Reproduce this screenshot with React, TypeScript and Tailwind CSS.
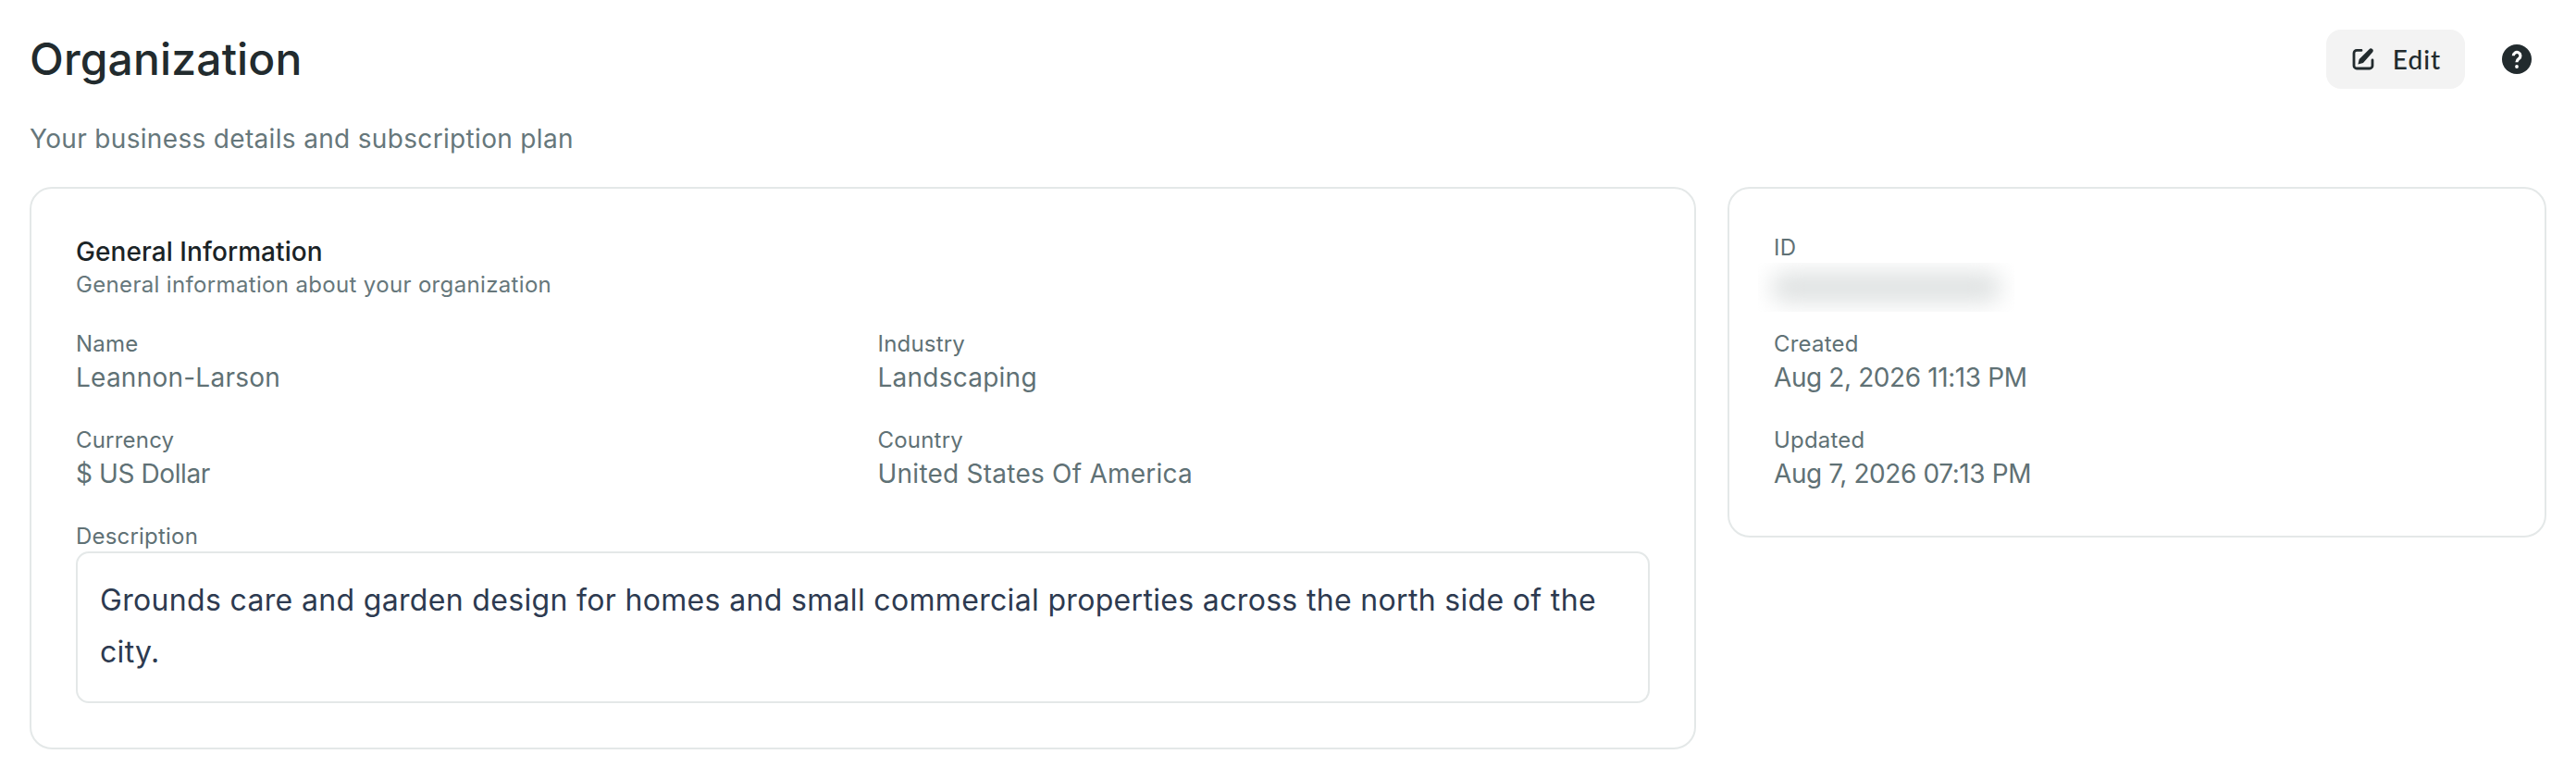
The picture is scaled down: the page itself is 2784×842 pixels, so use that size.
const font = "font-['Inter',sans-serif]";

function Field({ label, value, tight }: { label: string; value: string; tight?: boolean }) {
  return (
    <div className="flex flex-col">
      <span className="text-[24px] leading-[32px] tracking-[0.2px] text-[#5f7175]">{label}</span>
      <span className={`text-[28px] leading-[40px] text-[#5f7175] ${tight ? "tracking-[-0.4px]" : "tracking-[0.24px]"}`}>
        {value}
      </span>
    </div>
  );
}

function EditIcon() {
  return (
    <svg viewBox="0 0 24 24" className="ml-[2px] h-6 w-6" fill="none">
      <path
        d="M10 2.4H5a3 3 0 0 0-3 3V19a3 3 0 0 0 3 3h14a3 3 0 0 0 3-3v-6"
        stroke="#222b2e"
        strokeWidth="2.8"
        strokeLinecap="round"
      />
      <path d="M18.5 1.3a2.4 2.4 0 0 1 3.6 3.2L12 16l-5.6 1.6 1.3-5.6z" fill="#222b2e" />
    </svg>
  );
}

function HelpIcon() {
  return (
    <svg viewBox="0 0 32 32" className="h-8 w-8">
      <circle cx="16" cy="16" r="16" fill="#222b2e" />
      <path
        d="M12.3 12.3a3.8 3.8 0 1 1 6 3.1c-1.4 1-2.4 1.7-2.4 3.9"
        fill="none"
        stroke="#fff"
        strokeWidth="3.2"
      />
      <circle cx="16" cy="24" r="1.9" fill="#fff" />
    </svg>
  );
}

export default function App() {
  return (
    <div className={`${font} min-h-[842px] bg-white px-8 pt-8`}>
      <header className="flex h-16 items-center justify-between pr-4">
        <h1 className="text-[48px] font-medium leading-[64px] tracking-[0.14px] text-[#222b2e]">Organization</h1>
        <div className="flex items-center gap-10">
          <button className="flex h-16 w-[150px] items-center justify-center gap-[20px] rounded-2xl bg-[#f3f3f3] text-[28px] font-medium text-[#222b2e]">
            <EditIcon />
            <span className="font-['Lato',sans-serif] tracking-[1px]">Edit</span>
          </button>
          <HelpIcon />
        </div>
      </header>
      <p className="mt-[34px] text-[28px] leading-[40px] tracking-[0.33px] text-[#66777b]">
        Your business details and subscription plan
      </p>
      <div className="mt-[32px] flex items-start gap-[34px]">
        <section className="h-[608px] w-[1801px] rounded-3xl border-2 border-[#e4e8e8] px-12 pt-12">
          <h2 className="mt-[4px] text-[28px] font-medium leading-[32px] tracking-[0.07px] text-[#1a2326]">General Information</h2>
          <p className="mt-[4px] text-[24px] leading-[32px] tracking-[0.34px] text-[#66777b]">
            General information about your organization
          </p>
          <div className="mt-[32px] grid grid-cols-2 gap-x-8 gap-y-[32px]">
            <Field label="Name" value="Leannon-Larson" />
            <Field label="Industry" value="Landscaping" />
            <Field label="Currency" value="$ US Dollar" tight />
            <Field label="Country" value="United States Of America" />
          </div>
          <span className="mt-[32px] block text-[24px] leading-[32px] tracking-[0.2px] text-[#5f7175]">Description</span>
          <div className="h-[164px] rounded-[14px] border-2 border-[#e4e8e8] px-6 py-[23px] text-[32px] leading-[56px] tracking-[0.33px] text-[#2d3a50]">
            Grounds care and garden design for homes and small commercial properties across the north side of the city.
          </div>
        </section>
        <aside className="h-[379px] flex-1 rounded-3xl border-2 border-[#e4e8e8] px-12 pt-12">
          <span className="block text-[24px] leading-[32px] tracking-[0.2px] text-[#5f7175]">ID</span>
          <div className="-ml-[17px] h-[53px] w-[277px] overflow-hidden">
            <div className="mx-[14px] mt-[10px] h-[33px] rounded-full bg-[#dfe2e2] blur-[12px]" />
          </div>
          <div className="mt-[19px] flex flex-col gap-[32px]">
            <Field label="Created" value="Aug 2, 2026 11:13 PM" tight />
            <Field label="Updated" value="Aug 7, 2026 07:13 PM" tight />
          </div>
        </aside>
      </div>
    </div>
  );
}
